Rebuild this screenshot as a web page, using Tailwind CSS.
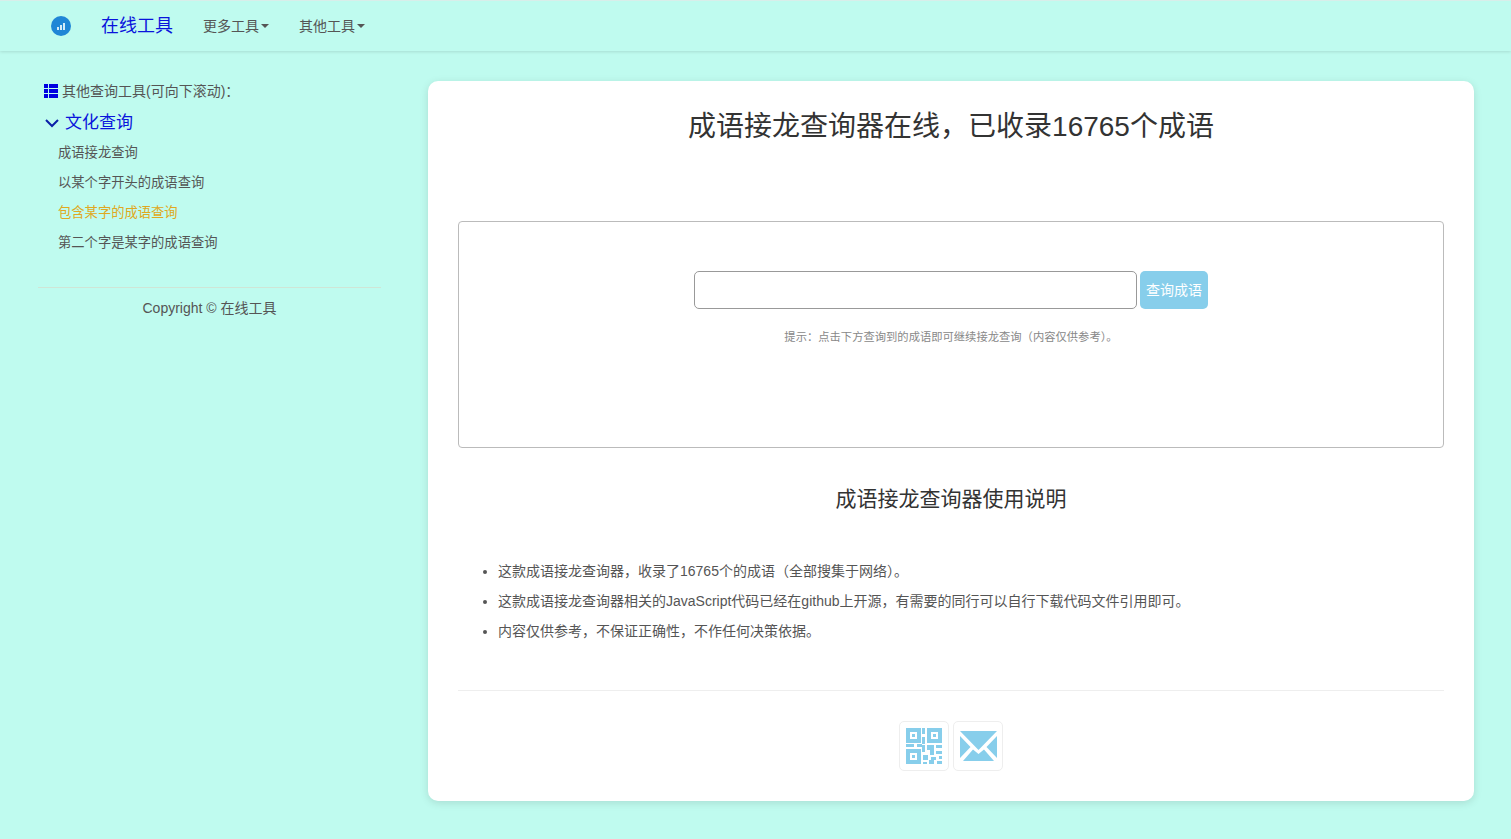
<!DOCTYPE html>
<html lang="zh-CN">
<head>
    <meta charset="UTF-8">
    <title>成语接龙查询器</title>
    <script src="https://cdn.jsdelivr.net/npm/@tailwindcss/browser@4"></script>
</head>
<body class="bg-[#bffbef] h-[839px] overflow-hidden text-[#333] font-['Liberation_Sans','Noto_Sans_CJK_SC',sans-serif]">
    <nav class="h-[51px] flex items-center border-t border-[#d8eeea] shadow-[0_1px_3px_rgba(0,0,0,0.12)]">
        <div class="ml-[51px] w-5 h-5 rounded-full bg-[#1f86d6] flex items-center justify-center">
            <svg width="10" height="10" viewBox="0 0 10 10" fill="#d5ecf8"><rect x="1" y="6" width="2" height="3"/><rect x="4" y="4" width="2" height="5"/><rect x="7" y="2" width="2" height="7"/></svg>
        </div>
        <a class="ml-[30px] text-[18px] text-[#0a14dc]">在线工具</a>
        <a class="ml-[30px] text-sm text-[#555] flex items-center">更多工具<span class="ml-[2px] border-x-4 border-t-4 border-x-transparent border-t-[#555]"></span></a>
        <a class="ml-[30px] text-sm text-[#555] flex items-center">其他工具<span class="ml-[2px] border-x-4 border-t-4 border-x-transparent border-t-[#555]"></span></a>
    </nav>

    <div class="flex items-start">
        <aside class="w-[428px] shrink-0 pl-[38px] pr-[47px] pt-[30px]">
            <div class="pl-[6px] flex items-center gap-1 text-sm text-[#555] h-5">
                <svg width="14" height="14" viewBox="0 0 14 14" fill="#0000e0"><path d="M0 0h4v4H0zM5 0h9v4H5zM0 5h4v4H0zM5 5h9v4H5zM0 10h4v4H0zM5 10h9v4H5z"/></svg>
                其他查询工具(可向下滚动)：
            </div>
            <div class="pl-[7px] mt-[11px] flex items-center gap-[6px] text-[17px] text-[#0a14dc] h-[22px]">
                <svg width="14" height="9" viewBox="0 0 14 9" fill="none" stroke="#0b1fa8" stroke-width="2"><path d="M1 1l6 6 6-6"/></svg>
                文化查询
            </div>
            <ul class="pl-5 mt-[4px] text-[13.3px] text-[#555]">
                <li class="h-[30px] leading-[30px]">成语接龙查询</li>
                <li class="h-[30px] leading-[30px]">以某个字开头的成语查询</li>
                <li class="h-[30px] leading-[30px] text-[#e0a820]">包含某字的成语查询</li>
                <li class="h-[30px] leading-[30px]">第二个字是某字的成语查询</li>
            </ul>
            <hr class="mt-[29px] border-[#cfe5d6]">
            <p class="mt-[10px] text-center text-sm text-[#555]">Copyright © 在线工具</p>
        </aside>

        <main class="w-[1046px] h-[720px] mt-[30px] bg-white rounded-[10px] shadow-[0_2px_8px_rgba(0,0,0,0.12)] px-[30px]">
            <h1 class="text-center text-[28px] leading-[34px] mt-[29px]">成语接龙查询器在线，已收录16765个成语</h1>
            <section class="mt-[77px] h-[227px] border border-[#bbb] rounded-[4px] pt-[49px]">
                <div class="flex justify-center gap-[3px]">
                    <input class="w-[443px] h-[38px] border border-[#999] rounded-[5px] bg-white">
                    <button class="w-[68px] h-[38px] rounded-[5px] bg-[#87ceeb] text-white text-sm">查询成语</button>
                </div>
                <p class="mt-[20px] text-center text-[11.3px] leading-4 text-[#888]">提示：点击下方查询到的成语即可继续接龙查询（内容仅供参考）。</p>
            </section>
            <h2 class="mt-[38px] text-center text-[21px] leading-[26px]">成语接龙查询器使用说明</h2>
            <ul class="mt-[44px] pl-10 list-disc text-sm text-[#555]">
                <li class="h-[30px] leading-[30px]">这款成语接龙查询器，收录了16765个的成语（全部搜集于网络）。</li>
                <li class="h-[30px] leading-[30px]">这款成语接龙查询器相关的JavaScript代码已经在github上开源，有需要的同行可以自行下载代码文件引用即可。</li>
                <li class="h-[30px] leading-[30px]">内容仅供参考，不保证正确性，不作任何决策依据。</li>
            </ul>
            <hr class="mt-[44px] border-[#eee]">
            <div class="mt-[30px] flex justify-center gap-1">
                <div class="w-[50px] h-[50px] border border-[#eee] rounded-[5px] flex items-center justify-center">
                    <svg width="36" height="36" viewBox="0 0 36 36" fill="#87ceeb"><path fill-rule="evenodd" d="M0 0h15v15H0zM4 4v7h7V4zM6 6h3v3H6zM21 0h15v15H21zM25 4v7h7V4zM27 6h3v3h-3zM0 21h15v15H0zM4 25v7h7v-7zM6 27h3v3H6zM16 0h3v6h-3zM16 9h3v8h-3zM0 16h8v3H0zM11 16h8v3h-8zM16 19h3v5h-3zM21 17h7v5h-7zM30 17h6v3h-6zM24 22h4v5h-4zM30 23h6v3h-6zM17 27h5v5h-5zM25 29h5v3h-5zM33 28h3v3h-3zM17 34h4v2h-4zM23 32h5v4h-5zM31 33h5v3h-5z"/></svg>
                </div>
                <div class="w-[50px] h-[50px] border border-[#eee] rounded-[5px] flex items-center justify-center">
                    <svg width="37" height="30" viewBox="0 0 37 30" fill="#87ceeb"><path d="M0 0h37L18.500 19zM0 5l10.500 11L0 27zM37 5v22L26.500 16zM3 30l10-11.500 5.500 4.500 5.500-4.500L34 30z"/></svg>
                </div>
            </div>
        </main>
    </div>
</body>
</html>
